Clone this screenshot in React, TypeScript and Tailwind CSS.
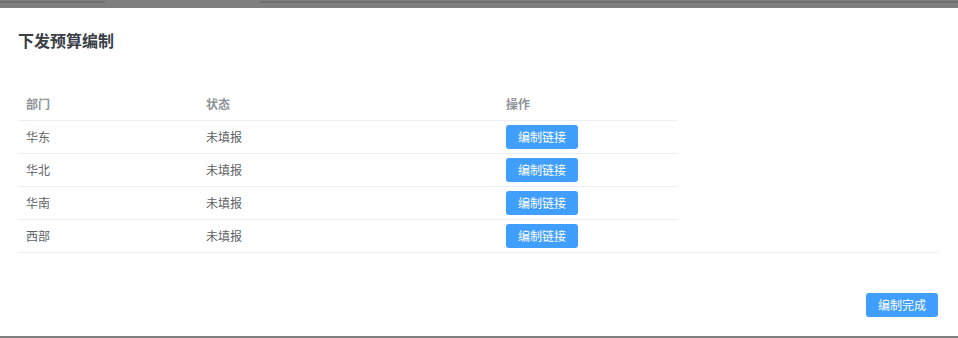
import React from "react";

const rows = ["华东", "华北", "华南", "西部"];

export default function App() {
  return (
    <div
      className="w-[958px] h-[338px] bg-[#7f7f7f] flex flex-col overflow-hidden"
      style={{ fontFamily: '"Noto Sans CJK SC", "Noto Sans", sans-serif' }}
    >
      <div className="h-[8px] flex">
        <div className="w-[105px] h-[2px] mt-[1px] bg-[#6e6e6e]" />
        <div className="w-[155px]" />
        <div className="flex-1 h-[2px] mt-[1px] bg-[#6e6e6e]" />
      </div>
      <div className="h-[328px] bg-white flex flex-col pl-[18px] pr-[20px] pt-[20px]">
        <div className="text-[16px] leading-[24px] font-bold text-[#3a3f48]">下发预算编制</div>
        <div className="mt-[36px] border-b border-[#ebeef5]">
          <div className="flex h-[33px] border-b border-[#ebeef5] w-[660px] text-[12px] font-bold text-[#909399]">
            <div className="w-[180px] pl-[8px] flex items-center">部门</div>
            <div className="w-[300px] pl-[8px] flex items-center">状态</div>
            <div className="w-[180px] pl-[8px] flex items-center">操作</div>
          </div>
          {rows.map((r, i) => (
            <div
              key={r}
              className={`flex w-[660px] text-[12px] text-[#606266] ${i < rows.length - 1 ? "h-[33px] border-b border-[#ebeef5]" : "h-[32px]"}`}
            >
              <div className="w-[180px] pl-[8px] flex items-center">{r}</div>
              <div className="w-[300px] pl-[8px] flex items-center">未填报</div>
              <div className="w-[180px] pl-[8px] flex items-center">
                <button className="w-[72px] h-[24px] rounded-[3px] bg-[#409eff] text-white text-[12px] flex items-center justify-center">
                  编制链接
                </button>
              </div>
            </div>
          ))}
        </div>
        <div className="flex justify-end mt-[40px]">
          <button className="w-[72px] h-[24px] rounded-[3px] bg-[#409eff] text-white text-[12px] flex items-center justify-center">
            编制完成
          </button>
        </div>
      </div>
      <div className="h-[2px] bg-[#7f7f7f]" />
    </div>
  );
}
